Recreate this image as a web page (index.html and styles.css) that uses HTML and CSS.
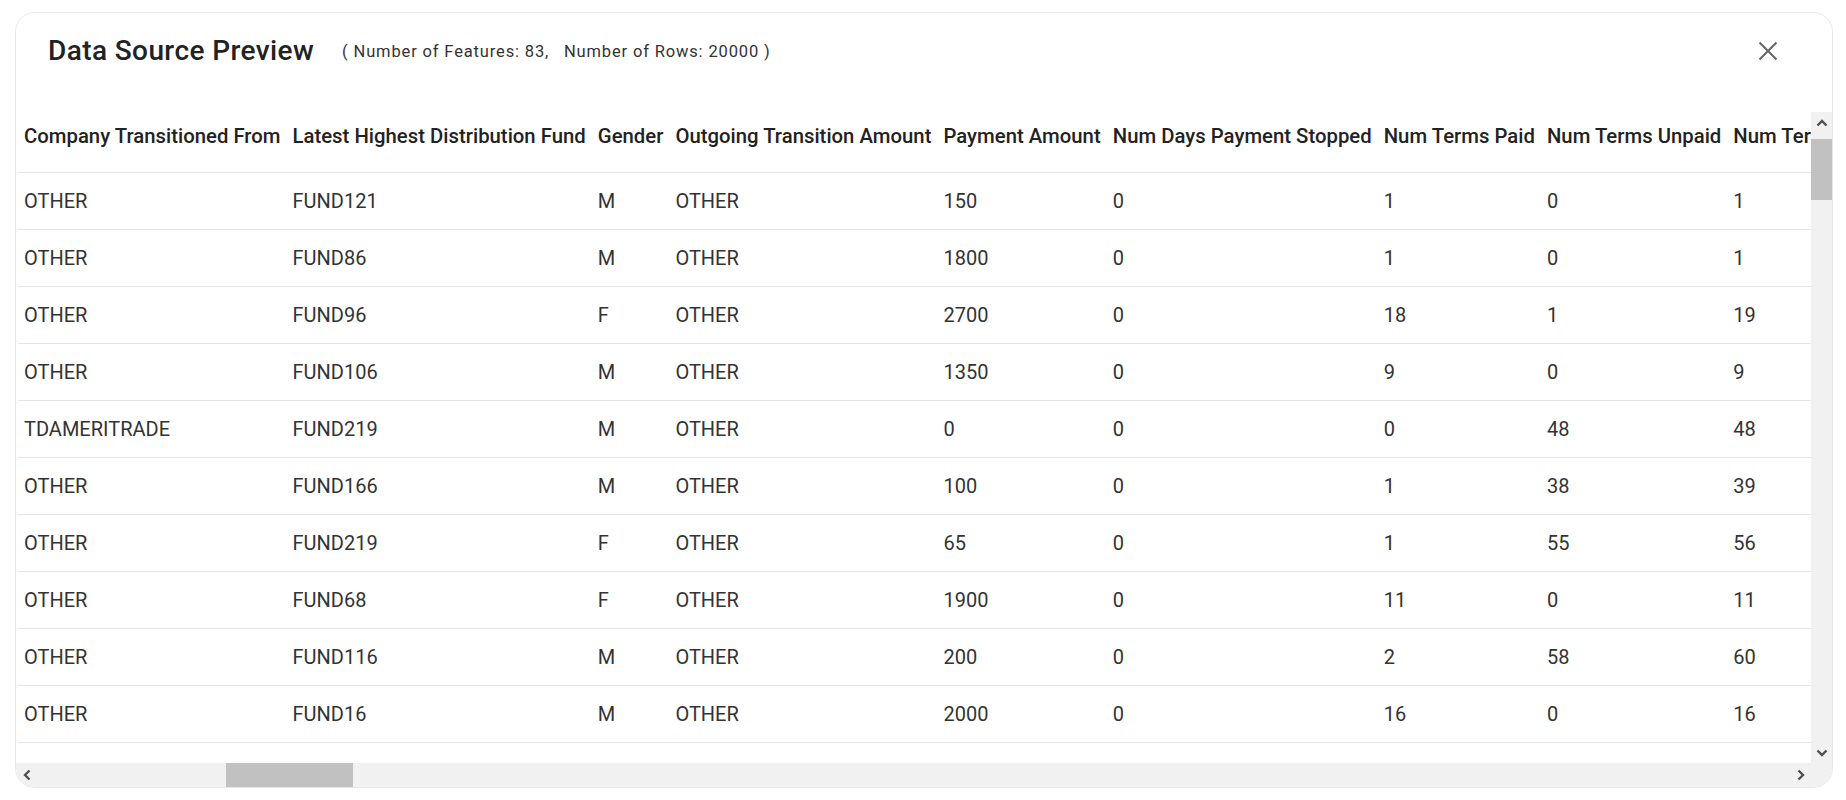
FILE: index.html
```html
<!DOCTYPE html>
<html lang="en">
<head>
<meta charset="utf-8">
<title>Data Source Preview</title>
<link rel="stylesheet" href="styles.css">
</head>
<body>
<div class="card">
  <div class="card-header">
    <h1 class="title">Data Source Preview</h1>
    <span class="subtitle">( Number of Features: 83,&nbsp;&nbsp; Number of Rows: 20000 )</span>
    <button class="close" aria-label="Close">
      <svg width="20" height="20" viewBox="0 0 20 20"><path d="M1.5 1.5 L18.5 18.5 M18.5 1.5 L1.5 18.5" stroke="#666" stroke-width="2" fill="none"/></svg>
    </button>
  </div>
  <div class="grid-area">
    <div class="viewport">
      <table class="data">
        <thead>
          <tr>
            <th>Company Transitioned From</th>
            <th>Latest Highest Distribution Fund</th>
            <th>Gender</th>
            <th>Outgoing Transition Amount</th>
            <th>Payment Amount</th>
            <th>Num Days Payment Stopped</th>
            <th>Num Terms Paid</th>
            <th>Num Terms Unpaid</th>
            <th>Num Terms Total</th>
            <th>Account Status</th>
            <th>Region</th>
          </tr>
        </thead>
        <tbody>
          <tr><td>OTHER</td><td>FUND121</td><td>M</td><td>OTHER</td><td>150</td><td>0</td><td>1</td><td>0</td><td>1</td><td>ACTIVE</td><td>WEST</td></tr>
          <tr><td>OTHER</td><td>FUND86</td><td>M</td><td>OTHER</td><td>1800</td><td>0</td><td>1</td><td>0</td><td>1</td><td>ACTIVE</td><td>EAST</td></tr>
          <tr><td>OTHER</td><td>FUND96</td><td>F</td><td>OTHER</td><td>2700</td><td>0</td><td>18</td><td>1</td><td>19</td><td>ACTIVE</td><td>WEST</td></tr>
          <tr><td>OTHER</td><td>FUND106</td><td>M</td><td>OTHER</td><td>1350</td><td>0</td><td>9</td><td>0</td><td>9</td><td>ACTIVE</td><td>SOUTH</td></tr>
          <tr><td>TDAMERITRADE</td><td>FUND219</td><td>M</td><td>OTHER</td><td>0</td><td>0</td><td>0</td><td>48</td><td>48</td><td>CLOSED</td><td>EAST</td></tr>
          <tr><td>OTHER</td><td>FUND166</td><td>M</td><td>OTHER</td><td>100</td><td>0</td><td>1</td><td>38</td><td>39</td><td>ACTIVE</td><td>NORTH</td></tr>
          <tr><td>OTHER</td><td>FUND219</td><td>F</td><td>OTHER</td><td>65</td><td>0</td><td>1</td><td>55</td><td>56</td><td>ACTIVE</td><td>WEST</td></tr>
          <tr><td>OTHER</td><td>FUND68</td><td>F</td><td>OTHER</td><td>1900</td><td>0</td><td>11</td><td>0</td><td>11</td><td>ACTIVE</td><td>EAST</td></tr>
          <tr><td>OTHER</td><td>FUND116</td><td>M</td><td>OTHER</td><td>200</td><td>0</td><td>2</td><td>58</td><td>60</td><td>ACTIVE</td><td>SOUTH</td></tr>
          <tr><td>OTHER</td><td>FUND16</td><td>M</td><td>OTHER</td><td>2000</td><td>0</td><td>16</td><td>0</td><td>16</td><td>ACTIVE</td><td>NORTH</td></tr>
          <tr><td>OTHER</td><td>FUND44</td><td>F</td><td>OTHER</td><td>300</td><td>0</td><td>4</td><td>0</td><td>4</td><td>ACTIVE</td><td>WEST</td></tr>
        </tbody>
      </table>
    </div>
    <div class="vscroll">
      <div class="sb-btn">
        <svg width="12" height="8" viewBox="0 0 12 8"><path d="M1.5 6.5 L6 2 L10.5 6.5" stroke="#505050" stroke-width="2.4" fill="none"/></svg>
      </div>
      <div class="vtrack"><div class="vthumb"></div></div>
      <div class="sb-btn">
        <svg width="12" height="8" viewBox="0 0 12 8"><path d="M1.5 1.5 L6 6 L10.5 1.5" stroke="#505050" stroke-width="2.4" fill="none"/></svg>
      </div>
    </div>
    <div class="hscroll">
      <div class="sb-btn">
        <svg width="8" height="12" viewBox="0 0 8 12"><path d="M6.5 1.5 L2 6 L6.5 10.5" stroke="#505050" stroke-width="2.4" fill="none"/></svg>
      </div>
      <div class="htrack"><div class="hthumb"></div></div>
      <div class="sb-btn">
        <svg width="8" height="12" viewBox="0 0 8 12"><path d="M1.5 1.5 L6 6 L1.5 10.5" stroke="#505050" stroke-width="2.4" fill="none"/></svg>
      </div>
    </div>
    <div class="corner"></div>
  </div>
</div>
</body>
</html>
```

FILE: styles.css
```css
* { box-sizing: border-box; }

html, body {
  margin: 0;
  padding: 0;
  background: #ffffff;
  font-family: Roboto, "Liberation Sans", sans-serif;
  color: #222;
}

.card {
  margin: 12px 13px 0 15px;
  height: 776px;
  border: 1px solid #e8e8e8;
  border-radius: 20px;
  overflow: hidden;
  display: flex;
  flex-direction: column;
  background: #fff;
}

.card-header {
  height: 76px;
  flex: none;
  display: flex;
  align-items: center;
  padding: 0 54px 0 32px;
}

.title {
  margin: 0;
  font-size: 28px;
  font-weight: 500;
  letter-spacing: 0.4px;
  color: #222;
  line-height: 1;
}

.subtitle {
  margin-left: 28px;
  font-size: 16.5px;
  letter-spacing: 0.85px;
  color: #333;
}

.close {
  margin-left: auto;
  border: 0;
  background: none;
  padding: 0;
  width: 20px;
  height: 20px;
  display: flex;
}

.grid-area {
  flex: 1;
  margin-top: 23px;
  min-height: 0;
  display: grid;
  grid-template-columns: 1fr 21px;
  grid-template-rows: 1fr 24px;
}

.viewport {
  overflow: hidden;
  padding-left: 2px;
  min-width: 0;
}

.data {
  border-collapse: collapse;
  white-space: nowrap;
}

.data th {
  height: 60px;
  padding: 0 6px 11px;
  font-size: 20.3px;
  letter-spacing: 0.025px;
  font-weight: 500;
  color: #222;
  text-align: left;
  vertical-align: middle;
  border-bottom: 1px solid #e6e6e6;
}

.data td {
  height: 57px;
  padding: 0 6px;
  font-size: 20px;
  color: #333;
  text-align: left;
  vertical-align: middle;
  border-bottom: 1px solid #e6e6e6;
}

.vscroll {
  background: #f1f1f1;
  display: flex;
  flex-direction: column;
}

.hscroll {
  background: #f1f1f1;
  display: flex;
}

.corner {
  background: #f1f1f1;
}

.sb-btn {
  flex: none;
  width: 21px;
  height: 21px;
  display: flex;
  align-items: center;
  justify-content: center;
}

.hscroll .sb-btn {
  height: 24px;
}

.vtrack {
  flex: 1;
}

.vthumb {
  margin-top: 6px;
  height: 61px;
  background: #c1c1c1;
}

.htrack {
  flex: 1;
  display: flex;
}

.hthumb {
  margin-left: 189px;
  width: 127px;
  height: 100%;
  background: #c1c1c1;
}
```
